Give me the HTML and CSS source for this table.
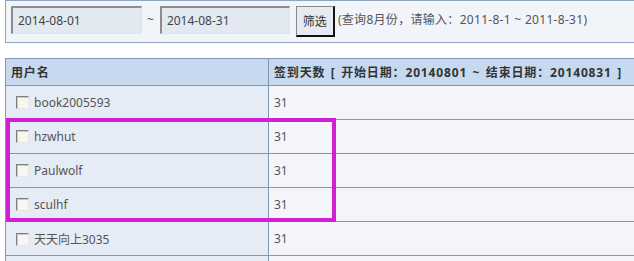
FILE: index.html
```html
<!DOCTYPE html>
<html lang="zh-CN">
<head>
<meta charset="utf-8">
<title>签到统计</title>
<link rel="stylesheet" href="styles.css">
</head>
<body>
<div class="page">
  <form class="filter">
    <input class="date" type="text" value="2014-08-01">
    <span class="tilde">~</span>
    <input class="date date2" type="text" value="2014-08-31">
    <button class="btn" type="button">筛选</button>
    <span class="hint">(查询8月份，请输入：2011-8-1 ~ 2011-8-31)</span>
  </form>

  <div class="tablewrap">
    <table class="list">
      <thead>
        <tr><th class="c1">用户名</th><th class="c2">签到天数 [ 开始日期：20140801 ~ 结束日期：20140831 ]</th></tr>
      </thead>
      <tbody>
        <tr><td class="c1"><span class="chk"></span>book2005593</td><td class="c2">31</td></tr>
        <tr><td class="c1"><span class="chk"></span>hzwhut</td><td class="c2">31</td></tr>
        <tr><td class="c1"><span class="chk"></span>Paulwolf</td><td class="c2">31</td></tr>
        <tr><td class="c1"><span class="chk"></span>sculhf</td><td class="c2">31</td></tr>
        <tr><td class="c1"><span class="chk"></span>天天向上3035</td><td class="c2">31</td></tr>
        <tr><td class="c1"><span class="chk"></span>&nbsp;</td><td class="c2">&nbsp;</td></tr>
      </tbody>
    </table>
    <div class="mark"></div>
  </div>
</div>
</body>
</html>
```

FILE: styles.css
```css
html, body {
  margin: 0;
  padding: 0;
  background: #ffffff;
  overflow: hidden;
}
body {
  font-family: "Noto Sans", "Noto Sans CJK SC", sans-serif;
  font-size: 12px;
  color: #333;
}
.page {
  width: 700px;
  padding-left: 5px;
}
.filter {
  display: flex;
  align-items: flex-start;
  margin: 0;
  border: 1px solid #8ea6c2;
  background: #f1f4f9;
  padding: 5px 0 0 5px;
  box-sizing: border-box;
  height: 43px;
}
.date {
  appearance: none;
  box-sizing: border-box;
  width: 131px;
  height: 28px;
  margin: 0;
  padding: 0 0 0 5px;
  border-style: solid;
  border-width: 2px 1px 1px 2px;
  border-color: #8c8c8c #dfe4ea #dfe4ea #8c8c8c;
  background: #e3e9f1;
  font-family: "Noto Sans", "Noto Sans CJK SC", sans-serif;
  font-size: 12px;
  color: #444;
  outline: none;
}
.date2 { width: 130px; }
.tilde {
  line-height: 28px;
  margin: 0 6px 0 5px;
  color: #555;
}
.btn {
  appearance: none;
  box-sizing: border-box;
  width: 39px;
  height: 31px;
  margin: 0 0 0 6px;
  padding: 0;
  border-style: solid;
  border-width: 1px 2px 2px 1px;
  border-color: #8a8a8a #111 #111 #8a8a8a;
  background: #e6ebf2;
  font-family: "Noto Sans", "Noto Sans CJK SC", sans-serif;
  font-size: 12px;
  color: #333;
}
.hint {
  line-height: 28px;
  margin-left: 3px;
  color: #555;
  letter-spacing: 0.3px;
}
.tablewrap {
  position: relative;
  margin-top: 15px;
}
.list {
  border-collapse: collapse;
  width: 690px;
  table-layout: fixed;
}
.list th, .list td {
  border: 1px solid #7d99b6;
  padding: 0 0 0 5px;
  text-align: left;
  white-space: nowrap;
  overflow: hidden;
}
.list th {
  height: 26px;
  background: #c6d9ef;
  font-weight: bold;
  color: #333;
  letter-spacing: 0.85px;
  word-spacing: 1.5px;
}
.list td {
  height: 33px;
  color: #555;
}
.list .c1 { width: 257px; }
.list td.c1 { background: #e5ecf5; padding-left: 10px; }
.list td.c2 { background: #f4f5f9; }
.chk {
  display: inline-block;
  box-sizing: border-box;
  width: 13px;
  height: 13px;
  margin-right: 5px;
  vertical-align: -2px;
  border-style: solid;
  border-width: 1px;
  border-color: #808080 #e6e6e6 #e6e6e6 #808080;
  background: #f7f7f2;
  box-shadow: inset 1px 1px 0 #c8c8c8;
}
.mark {
  position: absolute;
  left: 1px;
  top: 60px;
  width: 330px;
  height: 104px;
  box-sizing: border-box;
  border: 4px solid #d21fd4;
}
```
